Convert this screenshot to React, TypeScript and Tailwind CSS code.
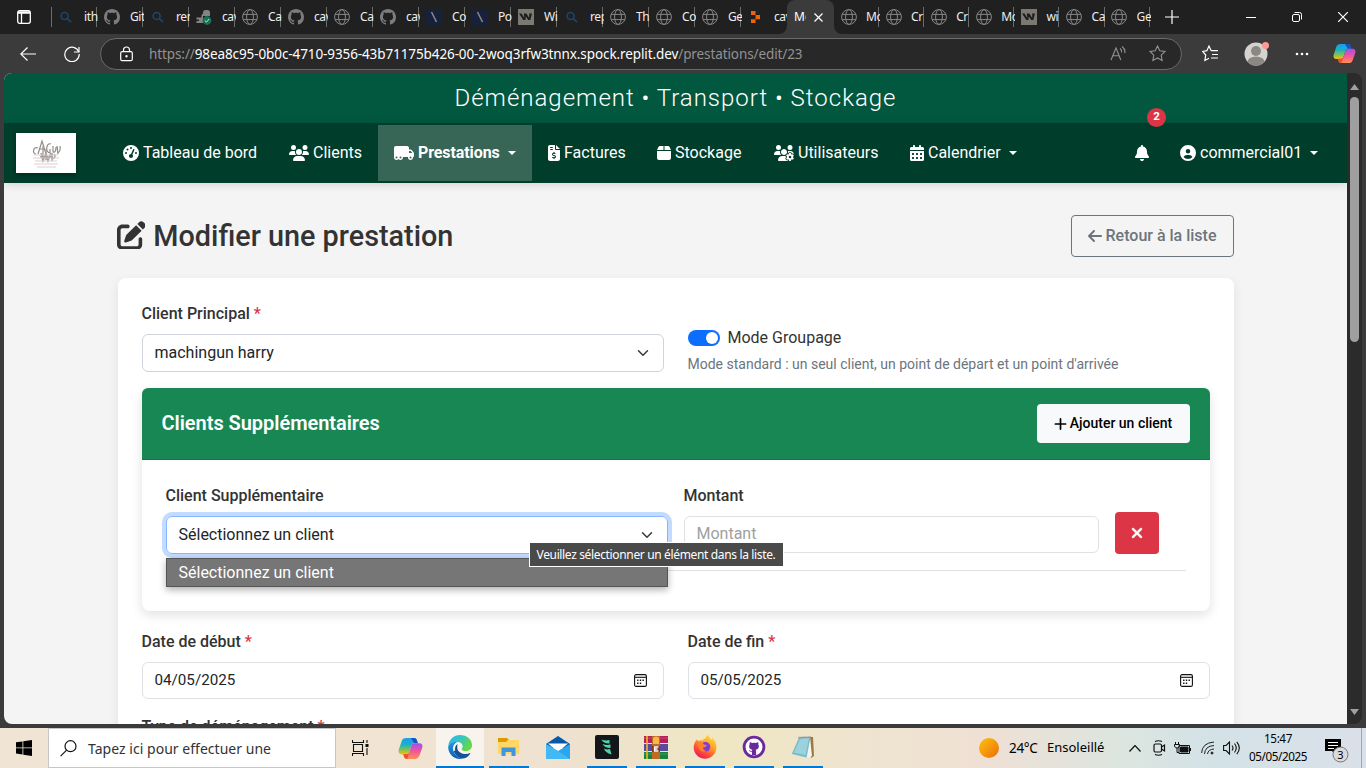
import React from "react";
import {
  FaGaugeHigh, FaUsers, FaTruckMoving, FaFileInvoiceDollar, FaBox, FaUsersGear,
  FaCalendarDays, FaBell, FaCircleUser, FaPenToSquare, FaArrowLeft, FaXmark,
} from "react-icons/fa6";

const GH =
  "M8 0C3.58 0 0 3.58 0 8c0 3.54 2.29 6.53 5.47 7.59.4.07.55-.17.55-.38 0-.19-.01-.82-.01-1.49-2.01.37-2.53-.49-2.69-.94-.09-.23-.48-.94-.82-1.13-.28-.15-.68-.52-.01-.53.63-.01 1.08.58 1.23.82.72 1.21 1.87.87 2.33.66.07-.52.28-.87.51-1.07-1.78-.2-3.64-.89-3.64-3.95 0-.87.31-1.59.82-2.15-.08-.2-.36-1.02.08-2.12 0 0 .67-.21 2.2.82.64-.18 1.32-.27 2-.27s1.36.09 2 .27c1.53-1.04 2.2-.82 2.2-.82.44 1.1.16 1.92.08 2.12.51.56.82 1.27.82 2.15 0 3.07-1.87 3.75-3.65 3.95.29.25.54.73.54 1.48 0 1.07-.01 1.93-.01 2.2 0 .21.15.46.55.38A8.01 8.01 0 0 0 16 8c0-4.42-3.58-8-8-8z";

type Kind = "search" | "github" | "globe" | "slash" | "w" | "replit" | "tool";

function TabIcon({ kind }: { kind: Kind }) {
  switch (kind) {
    case "search":
      return (
        <svg width="16" height="16" viewBox="0 0 16 16" fill="none" stroke="#1d4467" strokeWidth="1.7">
          <circle cx="6.6" cy="7" r="3.5" /><path d="M9.2 9.6 13 13" />
        </svg>
      );
    case "github":
      return <svg width="16" height="16" viewBox="0 0 16 16" fill="#7c7c7c"><path d={GH} /></svg>;
    case "globe":
      return (
        <svg width="16" height="16" viewBox="0 0 16 16" fill="none" stroke="#868686" strokeWidth="1">
          <circle cx="8" cy="8" r="7.4" /><ellipse cx="8" cy="8" rx="3.4" ry="7.4" /><path d="M1.2 5.4h13.6M1.2 10.6h13.6" />
        </svg>
      );
    case "slash":
      return (
        <svg width="16" height="16" viewBox="0 0 16 16">
          <path d="M0 0h16v16H0z" fill="#17213c" /><path d="M5.5 3 10.5 13" stroke="#8d8b82" strokeWidth="1.5" />
        </svg>
      );
    case "w":
      return (
        <svg width="16" height="16" viewBox="0 0 16 16">
          <path d="M0 0h16v16H0z" fill="#7b7972" /><path d="M1 4.500h2.500l2.800 4.500-.5-4.500h2.600l2.800 4.500V4.500H14L12.300 11h-2L7.800 7.500 7.400 11H5.300z" fill="#1d1d1d" />
        </svg>
      );
    case "replit":
      return <svg width="16" height="16" viewBox="0 0 16 16" fill="#f26207"><path d="M3 2h4.500v4H3zM7.500 6H12v4.200H7.500zM3 10.200h4.500V14H3z" /></svg>;
    case "tool":
      return (
        <svg width="16" height="16" viewBox="0 0 16 16">
          <path d="M.5 8.500h5V6l1.500-1.500V3a2.500 2.500 0 0 1 2.500-2h2A2.500 2.500 0 0 1 14 3.500V7H7v7H.5v-2H3v-1.500H.5z" fill="#838383" />
          <circle cx="11" cy="11.500" r="4.400" fill="#176f54" /><path d="m8.800 11.500 1.700 1.600 2.700-3.200" stroke="#ddd" fill="none" />
        </svg>
      );
  }
}

const leftTabs: [Kind, string][] = [
  ["search", "ith"], ["github", "Git"], ["search", "ren"], ["tool", "cav"], ["globe", "Ca"], ["github", "cav"],
  ["globe", "Ca"], ["github", "cav"], ["slash", "Co"], ["slash", "Po"], ["w", "Wi"], ["search", "rep"],
  ["globe", "Th"], ["globe", "Co"], ["globe", "Ge"], ["replit", "cav"],
];
const rightTabs: [Kind, string][] = [
  ["globe", "Mo"], ["globe", "Cr"], ["globe", "Cr"], ["globe", "Mo"], ["w", "wi"], ["globe", "Ca"], ["globe", "Ge"],
];

function Tab({ kind, label, narrow, last }: { kind: Kind; label: string; narrow?: boolean; last?: boolean }) {
  return (
    <div className={`flex h-5 shrink-0 items-center border-r ${last ? "border-transparent" : "border-[#6b6b6b]"} ${narrow ? "w-[45.1px] pl-[6.5px]" : "w-[46px] pl-[7px]"}`}>
      <TabIcon kind={kind} />
      <span className={`-mr-0.5 w-[14px] shrink-0 overflow-hidden whitespace-nowrap text-[12px] leading-5 tracking-[-0.4px] text-[#eeeeee] ${narrow ? "ml-[9.500px]" : "ml-[10px]"}`}>{label}</span>
    </div>
  );
}

function Copilot({ size, id }: { size: number; id: string }) {
  return (
    <svg width={size} height={size} viewBox="0 0 24 24">
      <defs>
        <linearGradient id={id + "a"} x1="0" y1="0" x2="0" y2="1">
          <stop offset="0" stopColor="#1b9df0" /><stop offset=".4" stopColor="#19b3c4" /><stop offset=".75" stopColor="#8bc34a" /><stop offset="1" stopColor="#f5c400" />
        </linearGradient>
        <linearGradient id={id + "b"} x1="0" y1="0" x2="0" y2="1">
          <stop offset="0" stopColor="#a14ef0" /><stop offset=".5" stopColor="#f0559a" /><stop offset="1" stopColor="#ff9152" />
        </linearGradient>
      </defs>
      <path d="M8 2h7.500c1.500 0 2.300 1 2.700 2.300L19 7h-3.500c-1.400 0-2.100.7-2.500 2l-2 6.500c-.5 1.500-1.300 2.200-2.800 2.200H3.500c-2.500 0-3.500-2-2.800-4.500L3.500 5C4.200 3 5.500 2 8 2z" fill={`url(#${id}a)`} />
      <path d="M12.500 2H15.500c1.500 0 2.300 1 2.700 2.300L19 7h-3.500z" fill="#1652c5" />
      <path d="M16 22H8.500c-1.500 0-2.300-1-2.700-2.300L5 17.500h3.200c1.500 0 2.300-.8 2.800-2.200L13 9c.4-1.300 1.100-2 2.500-2h5c2.500 0 3.500 1.800 2.800 4.300L20.500 19c-.7 2-2 3-4.500 3z" fill={`url(#${id}b)`} />
      <path d="M5 17.500h3.200c1 0 1.700-.4 2.200-1l-1.500 5.500c-1.700.1-2.700-1-3.100-2.300z" fill="#f04e2f" />
    </svg>
  );
}

function BrowserChrome() {
  return (
    <>
      <div className="flex h-[34px] shrink-0 bg-[#202020]">
        <div className="flex w-[52px] items-center justify-center pr-1">
          <svg width="14" height="14" viewBox="0 0 14 14" fill="none" stroke="#fff" strokeWidth="1.3">
            <rect x=".7" y=".7" width="12.600" height="12.600" rx="2" /><path d="M1 2.500h12" strokeWidth="2.500" /><path d="M4.500 3v10" />
          </svg>
        </div>
        <div className="-ml-px mt-[7px] h-5 w-px shrink-0 bg-[#6b6b6b]" />
        <div className="-ml-px flex items-center">
          {leftTabs.map(([k, l], i) => <Tab key={i} kind={k} label={l} last={i === 15} />)}
        </div>
        <div className="relative flex w-[47px] shrink-0 items-center rounded-t-lg bg-[#3b3b3b] pl-[7px]">
          <svg className="absolute -left-2 bottom-0" width="8" height="8"><path d="M8 0v8H0a8 8 0 0 0 8-8z" fill="#3b3b3b" /></svg>
          <svg className="absolute -right-2 bottom-0" width="8" height="8"><path d="M0 0v8h8a8 8 0 0 1-8-8z" fill="#3b3b3b" /></svg>
          <span className="w-3 overflow-hidden text-[12px] text-white">Mo</span>
          <svg className="ml-2" width="9" height="9" viewBox="0 0 9 9" stroke="#fff" strokeWidth="1.2"><path d="m.5.5 8 8m0-8-8 8" /></svg>
        </div>
        <div className="flex items-center">
          {rightTabs.map(([k, l], i) => <Tab key={i} kind={k} label={l} narrow />)}
        </div>
        <svg className="ml-[15px] mt-[10px]" width="14" height="14" viewBox="0 0 14 14" stroke="#fff" strokeWidth="1.2"><path d="M7 0v14M0 7h14" /></svg>
        <div className="flex flex-1 items-center justify-end gap-[36px] pr-[18px]">
          <svg width="10" height="11" stroke="#fff"><path d="M0 5.500h10" /></svg>
          <svg width="10" height="10" viewBox="0 0 10 10" fill="none" stroke="#fff"><rect x=".5" y="2.500" width="7" height="7" rx="1.500" /><path d="M2.500.5h5a2 2 0 0 1 2 2v5" /></svg>
          <svg width="10" height="10" viewBox="0 0 10 10" stroke="#fff" strokeWidth="1.200"><path d="m0 0 10 10M10 0 0 10" /></svg>
        </div>
      </div>
      <div className="flex h-[39px] shrink-0 items-center bg-[#3b3b3b] pl-5">
        <svg width="16" height="14" viewBox="0 0 16 14" fill="none" stroke="#fff" strokeWidth="1.200"><path d="M16 7H.8M7.500.5.8 7l6.700 6.500" /></svg>
        <svg className="ml-[28px]" width="16" height="16" viewBox="0 0 16 16" fill="none" stroke="#fff" strokeWidth="1.200"><path d="M14.800 6A7.200 7.200 0 1 0 15.200 8" /><path d="M15 1v5h-5" /></svg>
        <div className="ml-5 flex h-8 w-[1082px] items-center rounded-full border border-[#6a6a6a] bg-[#282828] pl-[19px] pr-[15px]">
          <svg width="13" height="16" viewBox="0 0 13 16" fill="none" stroke="#fff" strokeWidth="1.200"><rect x=".7" y="5.700" width="11.600" height="9" rx="1.500" /><path d="M3.500 5.500V4a3 3 0 0 1 6 0v1.500" /><circle cx="6.500" cy="10.300" r=".6" fill="#fff" /></svg>
          <span className="ml-4 mt-px whitespace-nowrap text-[13.5px] tracking-[-0.1px] text-[#929292]">https://<span className="text-white">98ea8c95-0b0c-4710-9356-43b71175b426-00-2woq3rfw3tnnx.spock.replit.dev</span>/prestations/edit/23</span>
          <svg className="ml-auto" width="16" height="15" viewBox="0 0 16 15" fill="none" stroke="#929292" strokeWidth="1.100"><path d="m1 14 5-12 4.800 12M2.800 9.800H9M10 2.500q2 1.500 1.500 4M12 .5q3.500 2.500 2.800 6.500" /></svg>
          <svg className="ml-[23px]" width="17" height="17" viewBox="0 0 17 17" fill="none" stroke="#929292" strokeWidth="1.100"><path d="m8.500 1 2.300 4.800 5.200.7-3.800 3.700.9 5.300-4.600-2.500-4.600 2.500.9-5.300L1 6.500l5.200-.7z" /></svg>
        </div>
        <svg className="ml-[20px]" width="17" height="17" viewBox="0 0 17 17" fill="none" stroke="#fff" strokeWidth="1.200"><path d="M9.200 5.700 7 1 4.900 5.700 0.700 6.500l3 3.500-.8 5.500L7 13.200M9.200 5.700H16M10 9.500h6M9 13h7" /></svg>
        <div className="relative ml-[25px] size-6">
          <svg width="24" height="24" viewBox="0 0 24 24"><defs><clipPath id="av"><circle cx="12" cy="12" r="11.500" /></clipPath></defs><g clipPath="url(#av)"><path d="M0 0h24v24H0z" fill="#d5d3cf" /><circle cx="12" cy="9" r="5" fill="#8b8884" /><ellipse cx="12" cy="20" rx="8.500" ry="5.500" fill="#8b8884" /></g></svg>
          <span className="absolute -right-px top-0 size-[7px] rounded-full bg-[#ff9b93]" />
        </div>
        <svg className="ml-[27px]" width="14" height="4" fill="#fff"><circle cx="2" cy="2" r="1.300" /><circle cx="7" cy="2" r="1.300" /><circle cx="12" cy="2" r="1.300" /></svg>
        <div className="ml-6"><Copilot size={23} id="cp1" /></div>
      </div>
    </>
  );
}

function Caret() {
  return <span className="ml-2 inline-block border-x-4 border-t-4 border-x-transparent border-t-white" />;
}

function NavItem({ icon: Icon, iconSize, label, width, caret, active }: { icon: React.ElementType; iconSize: string; label: string; width: string; caret?: boolean; active?: boolean }) {
  return (
    <div className={`flex h-14 shrink-0 items-center whitespace-nowrap pl-4 text-[16px] text-white ${width} ${active ? "bg-[#376556] font-bold tracking-[-0.1px]" : ""}`}>
      <Icon className={`mr-1 h-4 shrink-0 ${iconSize}`} />
      {label}
      {caret && <Caret />}
    </div>
  );
}

function Chevron() {
  return <svg width="16" height="12" viewBox="0 0 16 16" fill="none" stroke="#343a40" strokeWidth="2" strokeLinecap="round" strokeLinejoin="round"><path d="m2 5 6 6 6-6" /></svg>;
}

function CalendarGlyph() {
  return (
    <svg width="13" height="13" viewBox="0 0 13 13" fill="none" stroke="#111" strokeWidth="1.100">
      <rect x=".6" y=".6" width="11.800" height="11.800" rx="1.500" /><path d="M.6 3.300h11.800" />
      <path d="M5.800 6.200h1.400M8.500 6.200h1.400M3.100 9.200h1.400M5.800 9.200h1.400M3.100 6.200h1.400" strokeWidth="1.500" />
    </svg>
  );
}

function Label({ text, required }: { text: string; required?: boolean }) {
  return <div className="h-6 whitespace-nowrap pt-px text-[16px] font-medium leading-6 text-[#333]">{text}{required && <span className="text-[#dc3545]"> *</span>}</div>;
}

function DateField({ label, value }: { label: string; value: string }) {
  return (
    <div className="w-[522px]">
      <Label text={label} required />
      <div className="mt-[9px] flex h-[37px] items-center justify-between rounded-md border border-[#dee2e6] pl-3 pr-4 text-[#212529]">
        <span className="pb-px text-[15.2px]">{value}</span><CalendarGlyph />
      </div>
    </div>
  );
}

function Page() {
  return (
    <div className="flex h-[651px] w-[1343px] flex-col overflow-hidden rounded-l-lg bg-[#f4f4f4] font-['Roboto',sans-serif]">
      <div className="flex h-[50px] shrink-0 items-center justify-center bg-[#02573f] text-[24px] font-light tracking-[1px] text-white">Déménagement • Transport • Stockage</div>
      <div className="relative z-10 flex h-[60px] shrink-0 items-center bg-[#013d2b] shadow-[0_2px_8px_rgba(0,0,0,0.13)]">
        <div className="ml-3 flex h-10 w-[60px] items-center justify-center bg-white shadow-[0_2px_4px_rgba(0,0,0,0.3)]">
          <svg width="30" height="32" viewBox="0 0 30 32">
            <g fill="none" stroke="#77706e" strokeWidth="1.200" opacity=".8">
              <path d="M7 11c-5-2-6 6-2 6M7 17l4-13 4 13M8 12h6M20 7c-5-2-6 9-1 9v-4M22 9v6q3 1 3-5M26 9l1 8M29 9q1 5-2 7" />
              <path d="M10 16l2 8 3-8 2 8 3-8M12 9v14M21 16v8M23 17q3 3-2 5M15 12v11M9 20h13" stroke="#8b8480" strokeWidth="1.400" />
            </g>
            <path d="M3 18h24M2 21h26M4 24h22M3 27h24M6 30h19" stroke="#d8cdca" strokeWidth="1.300" opacity=".6" />
          </svg>
        </div>
        <nav className="ml-[31px] flex">
          <NavItem icon={FaGaugeHigh} iconSize="w-4" label="Tableau de bord" width="w-[166px]" />
          <NavItem icon={FaUsers} iconSize="w-5" label="Clients" width="w-[105px]" />
          <NavItem icon={FaTruckMoving} iconSize="w-5" label="Prestations" width="w-[154px]" caret active />
          <NavItem icon={FaFileInvoiceDollar} iconSize="w-3" label="Factures" width="w-[109px]" />
          <NavItem icon={FaBox} iconSize="w-[14px]" label="Stockage" width="w-[117px]" />
          <NavItem icon={FaUsersGear} iconSize="w-5" label="Utilisateurs" width="w-[136px]" />
          <NavItem icon={FaCalendarDays} iconSize="w-[14px]" label="Calendrier" width="w-[139px]" caret />
        </nav>
        <div className="relative ml-auto mr-[14px] text-[16px] text-white">
          <FaBell />
          <span className="absolute -top-[37px] left-[13px] flex size-[19px] items-center justify-center rounded-full bg-[#dc3545] pb-px text-[11.5px] font-bold">2</span>
        </div>
        <NavItem icon={FaCircleUser} iconSize="w-4" label="commercial01" width="w-[183px]" caret />
      </div>
      <div className="mx-auto w-[1116px] pt-8">
        <div className="flex h-[42px] items-center justify-between">
          <h1 className="-ml-px flex items-center whitespace-nowrap pt-px text-[28.8px] font-medium text-[#333]"><FaPenToSquare className="mb-[3px] mr-2" />Modifier une prestation</h1>
          <button className="flex h-[42px] w-[163px] items-center justify-center whitespace-nowrap rounded border border-[#6c757d] text-[16px] font-medium text-[#6c757d]"><FaArrowLeft className="-ml-px mr-[3px]" />Retour à la liste</button>
        </div>
        <div className="mt-[21px] h-[600px] rounded-lg bg-white px-6 pt-[23px] shadow-[0_4px_12px_rgba(0,0,0,0.08)]">
          <div className="flex h-[87px] gap-6">
            <div className="w-[522px]">
              <Label text="Client Principal" required />
              <div className="mt-[9px] flex h-[38px] items-center justify-between rounded-md border border-[#ced4da] px-3 text-[16px] text-[#212529]">machingun harry<Chevron /></div>
            </div>
            <div className="flex flex-col pt-[25px]">
              <div className="flex h-6 items-center text-[16px] text-[#333]">
                <span className="mr-2 flex h-4 w-8 items-center justify-end rounded-full bg-[#0d6efd] pr-[2px]"><span className="size-3 rounded-full bg-white" /></span>
                Mode Groupage
              </div>
              <div className="mt-1 whitespace-nowrap text-[14px] leading-[21px] text-[#6c757d]">Mode standard : un seul client, un point de départ et un point d'arrivée</div>
            </div>
          </div>
          <div className="h-[223px] rounded-lg bg-white shadow-[0_4px_12px_rgba(0,0,0,0.12)]">
            <div className="flex h-[72px] items-center justify-between rounded-t-md border-b border-[#15764a] bg-[#198754] px-5">
              <h2 className="pb-0.5 text-[20px] font-semibold tracking-[-0.04px] text-white">Clients Supplémentaires</h2>
              <button className="flex h-[39px] w-[153px] items-center justify-center whitespace-nowrap rounded bg-[#f8f9fa] text-[14px] font-medium text-black">
                <svg className="mr-[3px]" width="13" height="12" viewBox="0 0 13 12" stroke="#000" strokeWidth="1.700" strokeLinecap="round"><path d="M6.500.900v10.200M1.400 6h10.200" /></svg>
                Ajouter un client
              </button>
            </div>
            <div className="mx-6 flex h-[111px] gap-4 border-b border-[#dee2e6] pt-[23px]">
              <div className="relative w-[502px]">
                <Label text="Client Supplémentaire" />
                <div className="mt-[9px] flex h-[38px] items-center justify-between rounded-md border border-[#86b7fe] px-3 text-[16px] text-[#212529] shadow-[0_0_0_4px_rgba(13,110,253,0.25)]">Sélectionnez un client<Chevron /></div>
                <div className="absolute left-0 top-[75px] z-10 flex h-[29px] w-[502px] items-center border border-[#555] bg-[#767676] pl-3 text-[16px] text-white shadow-[0_3px_7px_rgba(0,0,0,0.3)]">Sélectionnez un client</div>
                <div className="absolute left-[363px] top-[59px] z-20 flex h-[25px] w-[255px] items-center justify-center whitespace-nowrap border border-white bg-[#4a4a4a] font-['Noto_Sans',sans-serif] text-[12px] tracking-[-0.35px] text-white">Veuillez sélectionner un élément dans la liste.</div>
              </div>
              <div className="w-[415px]">
                <Label text="Montant" />
                <div className="mt-[9px] flex h-[37px] items-center rounded-md border border-[#dee2e6] px-3 pb-px text-[16px] text-[#a0a0a0]">Montant</div>
              </div>
              <button className="mt-[29px] flex h-[42px] w-11 items-center justify-center rounded bg-[#dc3545] pb-px text-[16px] text-white"><FaXmark stroke="#fff" strokeWidth="16" /></button>
            </div>
          </div>
          <div className="mt-[18px] flex gap-6">
            <DateField label="Date de début" value="04/05/2025" />
            <DateField label="Date de fin" value="05/05/2025" />
          </div>
          <div className="mt-[15px]"><Label text="Type de déménagement" required /></div>
        </div>
      </div>
    </div>
  );
}

function TaskSlot({ children, line, active }: { children: React.ReactNode; line?: boolean; active?: boolean }) {
  return (
    <div className={`flex h-full shrink-0 flex-col items-center justify-between ${active ? "ml-px w-12 bg-[#f8f3ec]" : "w-[49px]"}`}>
      <div className="flex flex-1 items-center">{children}</div>
      <div className={`h-[2px] shrink-0 ${active ? "w-full" : "w-10"} ${line ? "bg-[#0078d4]" : ""}`} />
    </div>
  );
}

function Taskbar() {
  return (
    <div className="flex h-10 shrink-0 items-center bg-[linear-gradient(90deg,#f0e4d5_0%,#f2e4d3_28%,#eee1cf_42%,#efe7c3_53%,#eee3d0_64%,#efe0d4_72%,#dce5df_82%,#d3e2e7_89%,#dae0e9_100%)] font-['Noto_Sans',sans-serif] text-black">
      <div className="flex w-12 shrink-0 justify-center">
        <svg width="16" height="16" viewBox="0 0 16 16"><path d="M0 2.300 6.500 1.400v6H0zM7.300 1.300 16 0v7.400H7.300zM0 8.300h6.500v6.200L0 13.600zM7.300 8.300H16V16l-8.700-1.300z" /></svg>
      </div>
      <div className="flex h-10 w-[288px] shrink-0 items-center border border-[#c6c6c6] bg-white pl-[11px]">
        <svg width="17" height="17" viewBox="0 0 17 17" fill="none" stroke="#111" strokeWidth="1.200"><circle cx="10.500" cy="6.200" r="5.500" /><path d="m6.600 10.200-6 6" /></svg>
        <span className="ml-[11px] whitespace-nowrap text-[14px] tracking-[0.03px] text-[#333]">Tapez ici pour effectuer une</span>
      </div>
      <div className="flex w-12 shrink-0 justify-center">
        <svg width="17" height="16" viewBox="0 0 17 16" fill="none" stroke="#111" strokeWidth="1.100"><path d="M.5 0v2.500h11V0M.5 16v-2.500h11V16M1.500 4.500h9v7h-9zM15 0v3M15 8v7" /><path d="M15 4v3" strokeWidth="3" /></svg>
      </div>
      <div className="flex w-[52px] shrink-0 justify-center"><Copilot size={25} id="cp2" /></div>
      <div className="-ml-px flex h-10">
        <TaskSlot line active>
          <svg width="24" height="24" viewBox="0 0 24 24">
            <defs>
              <linearGradient id="e1" x1="0" y1="0" x2="1" y2=".5"><stop offset="0" stopColor="#2ab5e8" /><stop offset=".5" stopColor="#35c5c6" /><stop offset="1" stopColor="#65d842" /></linearGradient>
              <linearGradient id="e2" x1="0" y1="0" x2="0" y2="1"><stop offset="0" stopColor="#1f9ae0" /><stop offset="1" stopColor="#0b5cb5" /></linearGradient>
            </defs>
            <path d="M.3 11C.8 4.500 6 0 12 0c7 0 12 4.500 12 10 0 4-3 6-6.500 6-3 0-4.500-1.200-3.500-2.500 2-3-.5-6.500-4.500-6.500C5 7 1.200 8.500.3 11z" fill="url(#e1)" />
            <path d="M.2 12C.5 8.500 5 6 9 7.200c-3.500 1.500-5 5.300-3.500 9C7 20 11 23.500 15 23.600 7 25.500 0 19.500.2 12z" fill="url(#e2)" />
            <path d="M9.500 9c-4 3-3 10 2.500 12.500 4 1.800 7.800.5 10.500-3.500-5.500 2.500-12.500 0-13.200-4.300-.2-1.500 0-3 .2-4.700z" fill="#114a8b" />
            <path d="M5.500 16C7 20 11 23.500 15 23.600c3.500-.6 6-2.600 7.500-5.600-5 3-11.500 1.500-13-3z" fill="#14549b" />
          </svg>
        </TaskSlot>
        <TaskSlot line>
          <svg width="22" height="20" viewBox="0 0 22 20"><path d="M0 1h9l2 2v3H0z" fill="#d99b00" /><path d="M0 5h8l2-2h11v14H0z" fill="#ffd767" /><path d="M3.500 10.500h14V19h-4v-4h-6v4h-4z" fill="#3f96dd" /></svg>
        </TaskSlot>
        <TaskSlot>
          <svg width="24" height="23" viewBox="0 0 24 23"><path d="M0 8 12 0l12 8v4H0z" fill="#0758a8" /><path d="M2 7.500h20L12 16z" fill="#fff" /><path d="M0 8l12 7 12-7v15H0z" fill="#2aa6ec" /><path d="M0 8l12 7L24 23H0z" fill="#42b9f5" /></svg>
        </TaskSlot>
        <TaskSlot line>
          <svg width="24" height="24" viewBox="0 0 24 24"><rect width="24" height="24" rx="2" fill="#141719" /><path d="M6.500 4.500q4 1.500 8 .5v3.500q-6.500 0-8-4zM7.500 9q4 1.500 8 .5V13q-6 0-8-4zM9 13.500q3 1.500 6 .5l1.500 5.500Q10 17.500 9 13.500z" fill="#4bd6aa" /></svg>
        </TaskSlot>
        <TaskSlot line>
          <svg width="24" height="23" viewBox="0 0 24 23"><path d="M0 0h24v7H0z" fill="#b71f55" /><path d="M0 8h24v7H0z" fill="#5b4b9d" /><path d="M0 16h24v7H0z" fill="#17833c" /><path d="M0 2h24M0 18h24" stroke="#fff" strokeOpacity=".2" /><path d="M2 0h2v23H2z" fill="#f3b52d" opacity=".8" /><path d="M8 0h8v23H8z" fill="#bd6c26" /><path d="M9 2q3-3 6 0v6H9z" fill="#f8b74a" /><path d="M8 10h8v6H8z" fill="#7e3a1c" /><path d="M14.500 11h-4v4h4M10.500 13h3" stroke="#fff" fill="none" strokeWidth="1.300" /></svg>
        </TaskSlot>
        <TaskSlot line>
          <svg width="24" height="24" viewBox="0 0 24 24">
            <defs><linearGradient id="ff" x1=".9" y1="0" x2=".3" y2="1"><stop offset="0" stopColor="#ffe94a" /><stop offset=".45" stopColor="#ff9d23" /><stop offset=".75" stopColor="#ff4a38" /><stop offset="1" stopColor="#e6175f" /></linearGradient></defs>
            <path d="M3.800 4.500 5.500 6q2-1 4-.5Q11 3 13 3q0-2 1-3 3 2 4.500 5 1-1 .6-2.500Q24 7 23.400 13C22.800 19.500 18 23.700 12 23.700S1 19 .7 13C.5 9.500 2 6.500 3.800 4.500z" fill="url(#ff)" />
            <circle cx="12.500" cy="11.800" r="4.800" fill="#7d3bdc" /><path d="M5.500 7q4-1 5.500 2.500l3 .5q-1 2.500-4 2.500 0 2.500 3.500 3.500-4 2-7-1.500-3-3.500-1-7.500z" fill="#ff812e" />
          </svg>
        </TaskSlot>
        <TaskSlot line>
          <svg width="24" height="24" viewBox="-4 -4 24 24"><circle cx="8" cy="8" r="11.300" fill="#6b2a9c" /><circle cx="8" cy="8" r="8.500" fill="#fff" /><path d="M5.900 15.900v-3.200c-2 .4-2.600-.5-3-1.400 1.300 0 1.400 1 3 .6 0-.5.200-.9.500-1.100-3-.3-4-3-2.700-5.500-.2-.6-.2-1.400.1-2.100 1 0 1.600.5 2.200.9q2-.5 4 0c.6-.4 1.300-.9 2.200-.9.3.7.300 1.500.1 2.100 1.300 2.500.3 5.200-2.700 5.500.4.400.5 1 .5 1.600v3.500z" fill="#6b2a9c" /></svg>
        </TaskSlot>
        <TaskSlot line>
          <svg width="24" height="23" viewBox="0 0 24 23"><path d="M19 1h3l1 19-3 2z" fill="#9c7a45" /><path d="m19 2 2 18-5 2z" fill="#f4f4ef" /><path d="M8 1.500 19.500 1 15.500 21.500.8 18z" fill="#79bccb" /><path d="M9 3 18 2l-3.500 17L3 16.500z" fill="#a9dbe3" opacity=".7" /><path d="M7.500 1.500 20 1" stroke="#777" strokeDasharray="1 1" strokeWidth="1.500" /></svg>
        </TaskSlot>
      </div>
      <span className="ml-[152px] size-5 shrink-0 rounded-full bg-[linear-gradient(135deg,#fcc40d,#ee6c09)]" />
      <span className="ml-[10px] w-[38px] shrink-0 whitespace-nowrap text-[13.5px] tracking-[-0.3px]">24°C</span>
      <span className="w-[60px] shrink-0 whitespace-nowrap text-[13px]">Ensoleillé</span>
      <svg className="ml-[22px] shrink-0" width="12" height="7" viewBox="0 0 12 7" fill="none" stroke="#111" strokeWidth="1.200"><path d="m.5 6.500 5.500-6 5.500 6" /></svg>
      <svg className="ml-[11px] shrink-0" width="14" height="16" viewBox="0 0 14 16" fill="none" stroke="#111" strokeWidth="1.200"><rect x="2" y="4" width="7.500" height="8" rx="1.500" /><path d="m9.500 7 3-2v6l-3-2M3 1.500Q6.500 0 10 1.500M3 14.500Q6.500 16 10 14.500" /></svg>
      <svg className="ml-[8px] shrink-0" width="17" height="13" viewBox="0 0 17 13" fill="none" stroke="#111"><path d="M5 3.500h10.500v8H5zM16.500 6v3M1.500 0v2M4.500 0v2M.5 2.500h5V4q-.5 2-2.500 2T.5 4zM3 6v4.500h2" /><path d="M6.500 5H14v5H6.500z" fill="#111" /></svg>
      <svg className="ml-[10px] shrink-0" width="14" height="14" viewBox="0 0 14 14" fill="none" stroke="#222"><path d="M.6 12Q1 2 13 1M3.500 13Q4 5 13 4.500M6.500 13q.5-4.500 6.500-5" /><circle cx="11" cy="12" r="1" fill="#111" /></svg>
      <svg className="ml-[8px] shrink-0" width="17" height="14" viewBox="0 0 17 14" fill="none" stroke="#111" strokeWidth="1.100"><path d="M.6 4.500h2.500L6.500 1v12L3.100 9.500H.6zM9 4.500q2 2.500 0 5M11.500 2.500q3.500 4.500 0 9M13.800.8q5 6.200 0 12.400" /></svg>
      <div className="ml-[8px] w-[60px] shrink-0 whitespace-nowrap text-center text-[11.7px] leading-[18px] tracking-[-0.4px]"><div className="-mt-0.5">15:47</div><div>05/05/2025</div></div>
      <svg className="ml-[16px] mt-[5px] shrink-0" width="26" height="26" viewBox="0 0 26 26"><path d="M1 1h16v12h-5v4l-4-4H1z" /><path d="M4 4.500h10M4 7.500h10M4 10.500h6" stroke="#fff" /><circle cx="16.500" cy="16.500" r="7.500" fill="#d9dadd" stroke="#777" /><text x="16.500" y="20.500" textAnchor="middle" fontSize="11" fontFamily="Noto Sans">3</text></svg>
      <div className="ml-auto mr-[4px] h-10 w-px bg-[#9fa9b3]" />
    </div>
  );
}

export default function App() {
  return (
    <div className="flex h-[768px] w-[1366px] flex-col overflow-hidden bg-[#3b3b3b] font-['Noto_Sans',sans-serif]">
      <BrowserChrome />
      <div className="flex h-[655px] shrink-0 pl-1">
        <Page />
        <div className="flex h-[651px] w-[15px] flex-col items-center rounded-r-lg bg-[#2b2b2b]">
          <svg className="mt-[11px]" width="9" height="6" fill="#a0a0a0"><path d="M0 6 4.500 0 9 6z" /></svg>
          <div className="mt-[7px] h-[245px] w-[9px] rounded-full bg-[#9f9f9f]" />
          <svg className="mb-[9px] mt-auto" width="9" height="6" fill="#a0a0a0"><path d="M0 0h9L4.500 6z" /></svg>
        </div>
      </div>
      <Taskbar />
    </div>
  );
}
